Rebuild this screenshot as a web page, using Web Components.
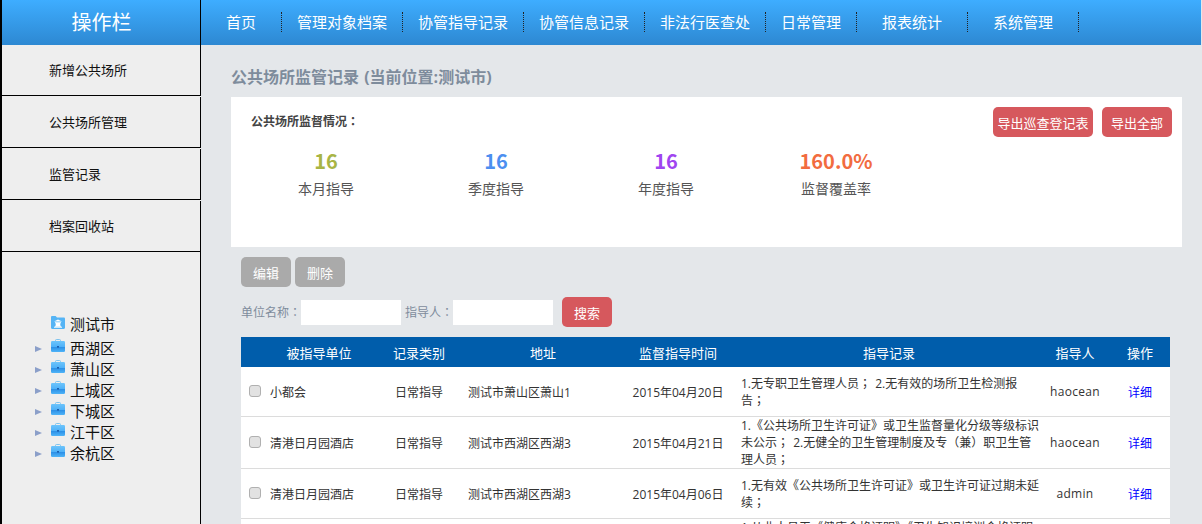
<!DOCTYPE html>
<html lang="zh-CN">
<head>
<meta charset="utf-8">
<title>公共场所监管记录</title>
<style>
html,body{margin:0;padding:0;height:524px;overflow:hidden;background:#e4e7ea;font-family:"Open Sans","Noto Sans CJK SC",sans-serif;}
</style>
</head>
<body>
<app-shell>
  <top-bar slot="top">
    <nav-link pad="25">首页</nav-link>
    <nav-link pad="15">管理对象档案</nav-link>
    <nav-link pad="15">协管指导记录</nav-link>
    <nav-link pad="15">协管信息记录</nav-link>
    <nav-link pad="15">非法行医查处</nav-link>
    <nav-link pad="15">日常管理</nav-link>
    <nav-link pad="25">报表统计</nav-link>
    <nav-link pad="25">系统管理</nav-link>
  </top-bar>
  <side-bar slot="side">
    <side-item>新增公共场所</side-item>
    <side-item>公共场所管理</side-item>
    <side-item>监管记录</side-item>
    <side-item>档案回收站</side-item>
    <org-tree>
      <tree-node kind="root">测试市</tree-node>
      <tree-node>西湖区</tree-node>
      <tree-node>萧山区</tree-node>
      <tree-node>上城区</tree-node>
      <tree-node>下城区</tree-node>
      <tree-node>江干区</tree-node>
      <tree-node>余杭区</tree-node>
    </org-tree>
  </side-bar>
  <record-page slot="main"></record-page>
</app-shell>
<script>
const ICON_BAG = `<svg width="14" height="13" viewBox="0 0 14 13"><defs><linearGradient id="b" x1="0" y1="0" x2="0" y2="1"><stop offset="0" stop-color="#6cc4fb"/><stop offset=".55" stop-color="#4db0f8"/><stop offset=".56" stop-color="#2b8fe6"/><stop offset="1" stop-color="#4fb4f8"/></linearGradient></defs><path d="M4.5 2.5V1.3C4.5.8 4.900.5 5.300.5h3.400c.4 0 .8.3.8.8v1.200" fill="none" stroke="#7fc4ee" stroke-width="1"/><rect x="0" y="2" width="14" height="11" rx="1.2" fill="url(#b)"/><rect x="6" y="7" width="2" height="1.6" fill="#1c5fae"/></svg>`;
const ICON_ROOT = `<svg width="14" height="13" viewBox="0 0 14 13"><path d="M0 1.2C0 .5.5 0 1.2 0h3.4l1.4 1.6h6.8c.7 0 1.2.5 1.2 1.2v9c0 .7-.5 1.2-1.2 1.2H1.2C.5 13 0 12.500 0 11.800z" fill="#55b4f5"/><path d="M7 3.600 11 5.600H3zM4 6.300h6v1H9.300v2.400H10v1H4v-1h.700V7.300H4z" fill="#fff"/><rect x="3" y="10.700" width="8" height="1" fill="#fff"/></svg>`;

function def(name, css, html, extra){
  const tpl = document.createElement('template');
  tpl.innerHTML = `<style>${css}</style>${html}`;
  customElements.define(name, class extends HTMLElement{
    constructor(){super();this.attachShadow({mode:'open'}).appendChild(tpl.content.cloneNode(true));}
    connectedCallback(){extra&&extra.call(this,this.shadowRoot);}
  });
}
const P = s => `<span class="p" lang="zh-TW">${s}</span>`;

def('app-shell',`
  :host{display:grid;grid-template-columns:201px 1fr;grid-template-rows:45px 479px;width:1201px;height:524px;overflow:hidden;}
  .brand{background:linear-gradient(#3eadff,#2d88d2);color:#fff;font-size:20px;line-height:45px;text-align:center;border-left:2px solid #000;border-right:1px solid #000;padding-left:1px;box-sizing:border-box}
  .side{overflow:hidden}
  .main{overflow:hidden;min-width:0}
`,`<div class="brand">操作栏</div><slot name="top"></slot><div class="side"><slot name="side"></slot></div><div class="main"><slot name="main"></slot></div>`);

def('top-bar',`
  :host{display:flex;align-items:center;height:45px;background:linear-gradient(#3eadff,#2d88d2);}
`,`<slot></slot>`);

def('nav-link',`
  :host{display:block;color:#fff;font-size:15px;line-height:20px;height:20px;border-right:1px dotted #222;margin-top:-1px;}
`,`<slot></slot>`,function(){const p=this.getAttribute('pad');this.style.padding=`0 ${p}px`;});

def('side-bar',`
  :host{display:flex;flex-direction:column;height:479px;background:#eee;border-left:2px solid #000;box-sizing:border-box;}
`,`<slot></slot>`);

def('side-item',`
  :host{display:flex;align-items:center;box-sizing:border-box;height:51px;flex:none;margin-top:1px;padding-left:47px;padding-bottom:2px;border-right:1px solid #000;border-bottom:1px solid #000;font-size:13px;color:#111;}
  :host(:first-child){margin-top:0}
`,`<slot></slot>`);

def('org-tree',`
  :host{display:flex;flex-direction:column;flex:1;border-right:1px solid #000;padding:60px 0 0 33px;margin-top:0;}
`,`<slot></slot>`);

def('tree-node',`
  :host{display:flex;align-items:center;box-sizing:border-box;height:21px;font-size:15px;color:#111;}
  :host([kind=root]){height:25px;padding-bottom:2px}
  :host([kind=root]) .ico{margin-top:-2px}
  .arrow{width:0;height:0;border-left:7px solid #8b9fc9;border-top:3.5px solid transparent;border-bottom:3.5px solid transparent;margin-right:9px;margin-top:3px}
  .arrow.none{visibility:hidden}
  .ico{display:flex;width:14px;height:13px;margin-right:5px;margin-top:-4px}
`,`<i class="arrow"></i><span class="ico"></span><slot></slot>`,function(){
  const root=this.getAttribute('kind')==='root';
  if(root)this.shadowRoot.querySelector('.arrow').classList.add('none');
  this.shadowRoot.querySelector('.ico').innerHTML=root?ICON_ROOT:ICON_BAG;
});

def('stat-box',`
  :host{display:block;width:170px;text-align:center;}
  .n{font-family:"Noto Sans CJK SC",sans-serif;font-size:20px;font-weight:700;line-height:28px;color:var(--c);}
  .l{font-size:14px;color:#555;line-height:20px;margin-top:4px}
`,`<div class="n"></div><div class="l"><slot></slot></div>`,function(r){
  r.querySelector('.n').textContent=this.getAttribute('value');
  this.style.setProperty('--c',this.getAttribute('color'));
});

def('ui-btn',`
  :host{display:inline-flex;align-items:center;justify-content:center;height:30px;box-sizing:border-box;border-radius:5px;color:#fff;font-size:13px;background:#d6585d;flex:none;}
  :host([tone=gray]){background:#aaa}
`,`<slot></slot>`,function(){this.style.width=(this.getAttribute('w')||50)+'px';});

def('record-table',`
  :host{display:block;width:929px;}
  table{border-collapse:separate;border-spacing:0;table-layout:fixed;width:929px;font-size:12px;color:#333;background:#fff}
  th{background:#005dab;color:#fff;font-weight:400;font-size:13px;height:30px;padding:0;text-align:center}
  td{padding:0;text-align:center;border-bottom:1px solid #dcdcdc;vertical-align:middle;box-sizing:border-box}
  td.l{text-align:left}
  td.name{padding-left:2px}
  td.note{line-height:17px;padding-left:3px;word-spacing:1px}
  td.who{letter-spacing:.3px}
  .p{font-family:"Noto Sans CJK TC",sans-serif;line-height:1}
  input{appearance:none;-webkit-appearance:none;display:block;margin:0 0 1px 8px;width:12px;height:12px;border:1px solid #b0b0b0;border-radius:3px;background:#e2e2e2;box-sizing:border-box}
  a{color:#00f;text-decoration:none}
  tr.a td{height:50px} tr.b td{height:52px}
`,`<table>
<colgroup><col style="width:27px"><col style="width:102px"><col style="width:98px"><col style="width:150px"><col style="width:120px"><col style="width:302px"><col style="width:70px"><col style="width:60px"></colgroup>
<thead><tr><th></th><th>被指导单位</th><th>记录类别</th><th>地址</th><th>监督指导时间</th><th>指导记录</th><th>指导人</th><th>操作</th></tr></thead>
<tbody>
<tr class="a"><td><input type="checkbox"></td><td class="l name">小都会</td><td>日常指导</td><td class="l">测试市萧山区萧山1</td><td>2015年04月20日</td><td class="l note">1.无专职卫生管理人员${P('；')} 2.无有效的场所卫生检测报<br>告${P('；')}</td><td class="who">haocean</td><td><a href="#">详细</a></td></tr>
<tr class="b"><td><input type="checkbox"></td><td class="l name">清港日月园酒店</td><td>日常指导</td><td class="l">测试市西湖区西湖3</td><td>2015年04月21日</td><td class="l note">1.《公共场所卫生许可证》或卫生监督量化分级等级标识<br>未公示${P('；')} 2.无健全的卫生管理制度及专${P('（')}兼${P('）')}职卫生管<br>理人员${P('；')}</td><td class="who">haocean</td><td><a href="#">详细</a></td></tr>
<tr class="a"><td><input type="checkbox"></td><td class="l name">清港日月园酒店</td><td>日常指导</td><td class="l">测试市西湖区西湖3</td><td>2015年04月06日</td><td class="l note">1.无有效《公共场所卫生许可证》或卫生许可证过期未延<br>续${P('；')}</td><td class="who">admin</td><td><a href="#">详细</a></td></tr>
<tr class="b"><td><input type="checkbox"></td><td class="l name">清港日月园酒店</td><td>日常指导</td><td class="l">测试市西湖区西湖3</td><td>2015年04月06日</td><td class="l note">1.从业人员无《健康合格证明》《卫生知识培训合格证明<br>未公示${P('；')} 2.无健全的卫生管理制度及专${P('（')}兼${P('）')}职卫生管<br>理人员${P('；')}</td><td class="who">admin</td><td><a href="#">详细</a></td></tr>
</tbody></table>`);

def('record-page',`
  :host{display:block;padding-left:30px;color:#7e8c9c;}
  h1{margin:0;font-size:16px;font-weight:700;line-height:22px;padding-top:21px;height:31px;color:#7e8c9c;white-space:nowrap;word-spacing:1px}
  .panel{background:#fff;width:951px;height:150px;box-sizing:border-box;padding:10px 10px 0 20px;display:flex;flex-direction:column}
  .ptop{display:flex;justify-content:space-between;align-items:flex-start}
  .ptitle{font-size:12px;font-weight:700;color:#444;line-height:29px}
  .btns{display:flex;gap:9px}
  .stats{display:flex;margin:10px 0 0 -10px}
  .body{padding-left:10px}
  .tools{display:flex;gap:4px;padding-top:10px}
  .search{display:flex;align-items:center;height:30px;margin-top:10px;font-size:12px;color:#7e8c9c}
  .search input{width:100px;height:25px;border:0;padding:0;background:#fff;box-sizing:border-box;margin:0 4px 0 0;display:block}
  .search ui-btn{margin-left:5px}
  .p{font-family:"Noto Sans CJK TC",sans-serif;line-height:1}
  record-table{margin-top:10px}
`,`<h1>公共场所监管记录 (当前位置:测试市)</h1>
<section class="panel">
  <div class="ptop"><div class="ptitle">公共场所监督情况${P('：')}</div><div class="btns"><ui-btn w="100">导出巡查登记表</ui-btn><ui-btn w="70">导出全部</ui-btn></div></div>
  <div class="stats">
    <stat-box value="16" color="#a8b545">本月指导</stat-box>
    <stat-box value="16" color="#4c8ff0">季度指导</stat-box>
    <stat-box value="16" color="#a045f0">年度指导</stat-box>
    <stat-box value="160.0%" color="#f26c3f">监督覆盖率</stat-box>
  </div>
</section>
<div class="body">
  <div class="tools"><ui-btn tone="gray">编辑</ui-btn><ui-btn tone="gray">删除</ui-btn></div>
  <div class="search"><span>单位名称${P('：')}</span><input type="text"><span>指导人${P('：')}</span><input type="text"><ui-btn>搜索</ui-btn></div>
  <record-table></record-table>
</div>`);
</script>
</body>
</html>
